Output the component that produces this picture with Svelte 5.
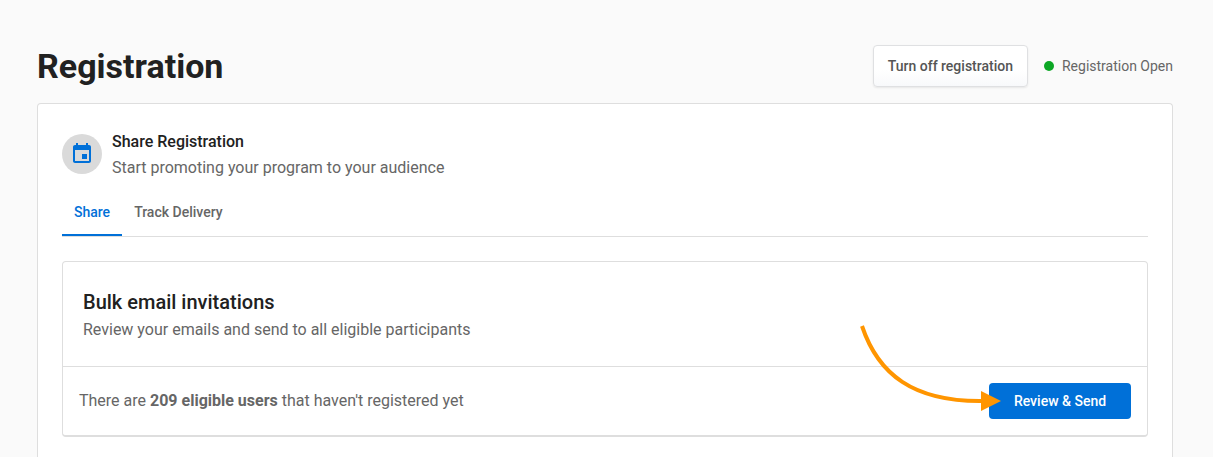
<script>
  const tabs = ['Share', 'Track Delivery'];
  let active = $state('Share');
  const eligible = 209;
</script>

<main class="page">
  <header class="page-head">
    <h1>Registration</h1>
    <div class="actions">
      <button class="btn-outline" type="button">Turn off registration</button>
      <span class="status"><span class="dot"></span>Registration Open</span>
    </div>
  </header>

  <section class="panel">
    <div class="intro">
      <span class="badge">
        <svg viewBox="0 0 24 24" width="24" height="24" aria-hidden="true">
          <path d="M17 12h-5v5h5v-5zM16 1v2H8V1H6v2H5c-1.11 0-1.99.9-1.99 2L3 19c0 1.1.89 2 2 2h14c1.1 0 2-.9 2-2V5c0-1.1-.9-2-2-2h-1V1h-2zm3 18H5V8h14v11z" />
        </svg>
      </span>
      <div>
        <h2>Share Registration</h2>
        <p>Start promoting your program to your audience</p>
      </div>
    </div>

    <div class="tabs" role="tablist">
      {#each tabs as tab}
        <button
          type="button"
          role="tab"
          class="tab"
          class:active={active === tab}
          aria-selected={active === tab}
          onclick={() => (active = tab)}>{tab}</button>
      {/each}
    </div>

    <article class="card">
      <div class="card-head">
        <h3>Bulk email invitations</h3>
        <p>Review your emails and send to all eligible participants</p>
      </div>
      <div class="card-foot">
        <p>There are <strong>{eligible} eligible users</strong> that haven't registered yet</p>
        <div class="send">
          <button class="btn-primary" type="button">Review &amp; Send</button>
          <svg class="arrow" viewBox="0 0 144 88" width="144" height="88" aria-hidden="true">
            <path d="M5 2C21 50 56 78 126 77" fill="none" stroke="#ff9500" stroke-width="4" />
            <path d="M124 67L144 77L124 87Z" fill="#ff9500" />
          </svg>
        </div>
      </div>
    </article>
  </section>
</main>

<style>
  :global(body) {
    margin: 0;
    background: #fafafa;
  }

  .page {
    box-sizing: border-box;
    min-height: 100vh;
    display: flex;
    flex-direction: column;
    padding: 45px 40px 0 37px;
    font-family: Roboto, "Liberation Sans", sans-serif;
    font-size: 16px;
    line-height: 24px;
    color: #666;
  }

  h1, h2, h3, p {
    margin: 0;
  }

  button {
    font-family: inherit;
    font-size: 14px;
    font-weight: 500;
    line-height: 20px;
    cursor: pointer;
  }

  .page-head {
    display: flex;
    align-items: center;
    justify-content: space-between;
    margin-bottom: 16px;
  }

  h1 {
    font-size: 34px;
    line-height: 40px;
    font-weight: 700;
    color: #212121;
  }

  .actions {
    display: flex;
    align-items: center;
    gap: 16px;
  }

  .btn-outline {
    padding: 10px 14px;
    color: #555;
    background: linear-gradient(#fff 60%, #f8f9fb);
    border: 1px solid #dfe0e2;
    border-radius: 4px;
    box-shadow: 0 1px 2px rgba(0, 0, 0, 0.08);
  }

  .status {
    display: flex;
    align-items: center;
    gap: 8px;
    font-size: 14px;
  }

  .dot {
    width: 10px;
    height: 10px;
    border-radius: 50%;
    background: #0ca725;
  }

  .panel {
    flex: 1;
    padding: 26px 24px 20px;
    background: #fff;
    border: 1px solid #dedede;
    border-bottom: 0;
    border-radius: 4px 4px 0 0;
  }

  .intro {
    display: flex;
    align-items: flex-start;
    gap: 10px;
  }

  .intro h2 {
    font-size: 16px;
    line-height: 24px;
    font-weight: 500;
    color: #212121;
  }

  .intro p {
    line-height: 28px;
  }

  .badge {
    display: flex;
    align-items: center;
    justify-content: center;
    width: 40px;
    height: 40px;
    margin-top: 4px;
    border-radius: 50%;
    background: #dadada;
    fill: #0070d8;
  }

  .tabs {
    display: flex;
    margin: 6px 0 24px;
    border-bottom: 1px solid #dedede;
  }

  .tab {
    padding: 14px 12px 12px;
    height: 48px;
    border: 0;
    border-bottom: 2px solid transparent;
    background: none;
    color: #666;
  }

  .tab.active {
    color: #0070d8;
    border-bottom-color: #0070d8;
  }

  .card {
    border: 1px solid #dedede;
    border-bottom-width: 2px;
    border-radius: 4px;
  }

  .card-head {
    padding: 26px 20px 22px;
    border-bottom: 1px solid #dedede;
  }

  .card-head h3 {
    font-size: 20px;
    line-height: 28px;
    font-weight: 500;
    color: #212121;
  }

  .card-head p {
    line-height: 28px;
  }

  .card-foot {
    display: flex;
    align-items: center;
    justify-content: space-between;
    padding: 16px;
  }

  .send {
    position: relative;
  }

  .btn-primary {
    display: block;
    min-width: 142px;
    padding: 8px 16px;
    border: 0;
    border-radius: 4px;
    background: #0070d8;
    color: #fff;
  }

  .arrow {
    position: absolute;
    right: 130px;
    bottom: 7px;
    pointer-events: none;
  }
</style>
